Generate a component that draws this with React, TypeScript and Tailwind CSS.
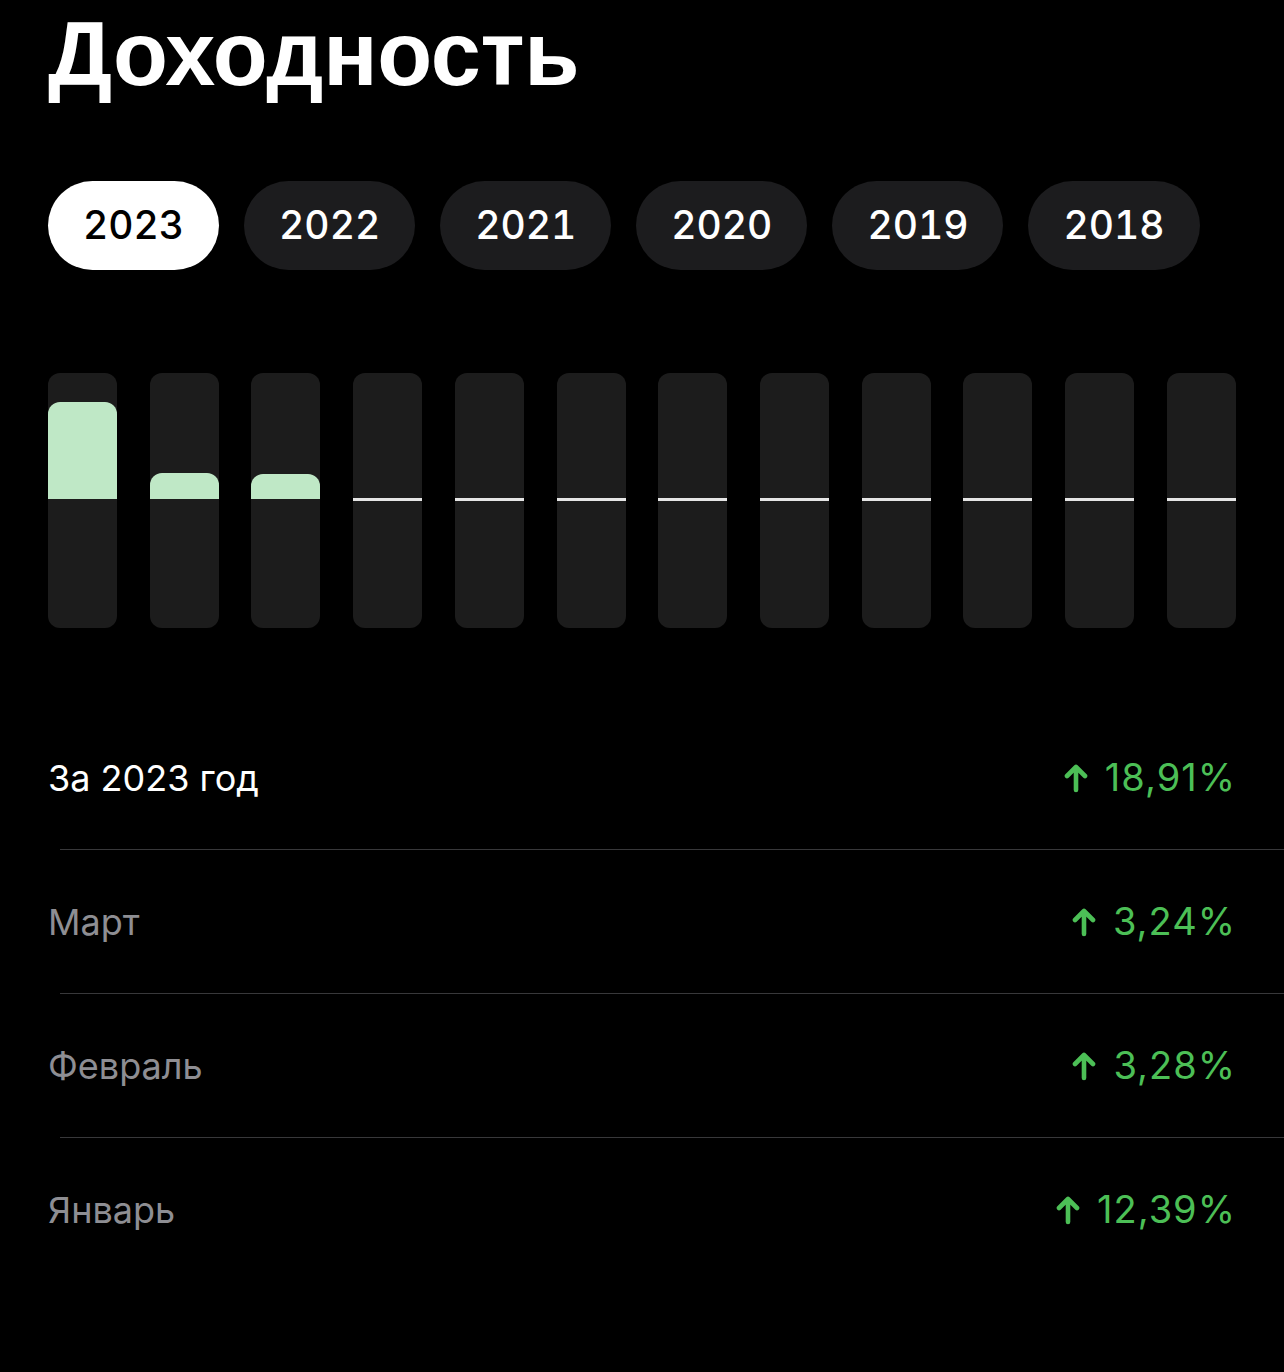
import { ReactNode } from "react";

const years = ["2023", "2022", "2021", "2020", "2019", "2018"];

// высота зелёного столбика в px, 0 — месяц без данных
const bars = [97, 26, 25, 0, 0, 0, 0, 0, 0, 0, 0, 0];

const rows = [
  { label: "За 2023 год", value: "18,91%", main: true },
  { label: "Март", value: "3,24%" },
  { label: "Февраль", value: "3,28%" },
  { label: "Январь", value: "12,39%" },
];

const ArrowUp = () => (
  <svg width="24" height="30" viewBox="0 0 24 30" fill="none">
    <path
      d="M12 27V4M3 13l9-9 9 9"
      stroke="#4cbf56"
      strokeWidth="4.6"
      strokeLinecap="round"
      strokeLinejoin="round"
    />
  </svg>
);

const Row = ({ label, value, main, last }: { label: ReactNode; value: string; main?: boolean; last?: boolean }) => (
  <div>
    <div className="flex h-[143px] items-center justify-between px-12">
      <span className={`text-[36px] ${main ? "text-white" : "text-[#8e8e93]"}`}>{label}</span>
      <span className="flex items-center gap-[17px] text-[38px] tracking-[1px] text-[#4cbf56]">
        <ArrowUp />
        {value}
      </span>
    </div>
    {!last && <div className="ml-[60px] h-px bg-[#38383a]" />}
  </div>
);

const App = () => {
  return (
    <div
      className="min-h-[1372px] w-full bg-black pt-[9px] text-white"
      style={{ fontFamily: "Inter, 'Noto Sans', sans-serif" }}
    >
      <h1
        className="px-12 text-[90px] font-bold leading-none tracking-[-0.3px]"
        style={{ fontFamily: "'Liberation Sans', Arial, sans-serif" }}
      >
        Доходность
      </h1>

      <div className="mt-[82px] flex gap-[25px] px-12">
        {years.map((y, i) => (
          <div
            key={y}
            className={`flex h-[89px] items-center rounded-full px-[35px] text-[39px] font-medium tabular-nums ${
              i === 0 ? "bg-white text-black" : "bg-[#1c1c1e] text-white"
            }`}
          >
            {y}
          </div>
        ))}
      </div>

      <div className="mt-[103px] flex justify-between px-12">
        {bars.map((h, i) => (
          <div key={i} className="relative h-[255px] w-[69px] overflow-hidden rounded-[12px] bg-[#1c1c1c]">
            {h > 0 ? (
              <div
                className="absolute left-0 right-0 top-[126px] -translate-y-full rounded-t-[12px] bg-[#bfe8c6]"
                style={{ height: h }}
              />
            ) : (
              <div className="absolute left-0 right-0 top-[125px] h-[3px] bg-[#e5e5e5]" />
            )}
          </div>
        ))}
      </div>

      <div className="mt-[78px]">
        {rows.map((r, i) => (
          <Row key={r.label} label={r.label} value={r.value} main={r.main} last={i === rows.length - 1} />
        ))}
      </div>
    </div>
  );
};

export default App;
